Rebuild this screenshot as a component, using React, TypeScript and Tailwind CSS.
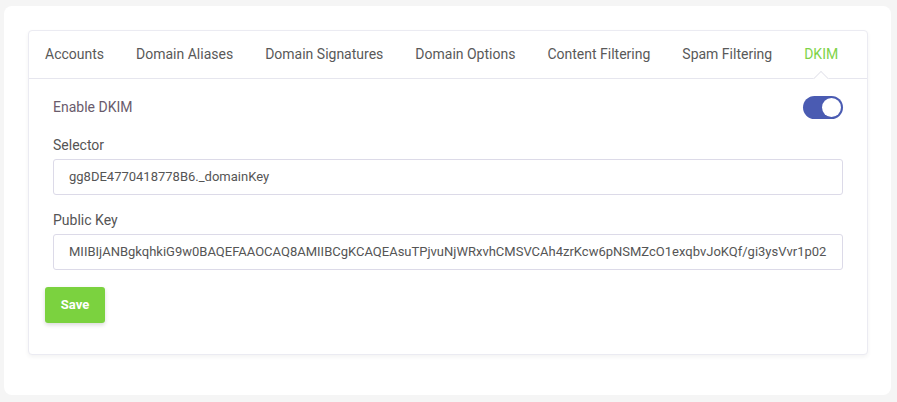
const tabs = [
  'Accounts',
  'Domain Aliases',
  'Domain Signatures',
  'Domain Options',
  'Content Filtering',
  'Spam Filtering',
  'DKIM',
];

const publicKey =
  'MIIBIjANBgkqhkiG9w0BAQEFAAOCAQ8AMIIBCgKCAQEAsuTPjvuNjWRxvhCMSVCAh4zrKcw6pNSMZcO1exqbvJoKQf/gi3ysVvr1p02';

export default function App() {
  return (
    <div className="min-h-[402px] bg-[#f5f5f5] pt-[6px] pl-[4px] pr-[6px] pb-[7px] font-['Roboto',sans-serif]">
      <div className="bg-white rounded-lg h-[389px] pt-[24px] pl-[24px] pr-[23px]">
        <div className="border border-[#ebebf2] rounded-[4px] shadow-[0_2px_4px_rgba(0,0,0,0.05)] bg-white h-[325px]">
          {/* Tabs */}
          <div className="flex h-[48px] border-b border-[#e6e6ee] text-[14px]">
            {tabs.map((t) => {
              const active = t === 'DKIM';
              return (
                <div
                  key={t}
                  className={`relative flex items-center px-4 ${active ? 'text-[#7ed348]' : 'text-[#595959]'}`}
                >
                  {t}
                  {active && (
                    <span className="absolute left-1/2 -translate-x-1/2 bottom-[-6px] w-[11px] h-[11px] rotate-45 bg-white border-l border-t border-[#e6e6ee]" />
                  )}
                </div>
              );
            })}
          </div>

          {/* Body */}
          <div className="px-[24px] pt-[17px]">
            <div className="flex items-center justify-between h-[22px]">
              <span className="text-[14px] text-[#6a5b6c]">Enable DKIM</span>
              <div className="w-[40px] h-[23px] rounded-full bg-[#4a5bb2] flex items-center justify-end pr-[2px]">
                <div className="w-[19px] h-[19px] rounded-full bg-white" />
              </div>
            </div>

            <div className="mt-[18px] text-[14px] text-[#555555] leading-[18px]">Selector</div>
            <div className="mt-[5px] h-[36px] border border-[#dcdae8] rounded-[3px] flex items-center px-[15px] text-[13px] text-[#555555]">
              gg8DE4770418778B6._domainKey
            </div>

            <div className="mt-[16px] text-[14px] text-[#555555] leading-[18px]">Public Key</div>
            <div className="mt-[5px] h-[36px] border border-[#dcdae8] rounded-[3px] flex items-center px-[15px] text-[13px] text-[#555555] overflow-hidden whitespace-nowrap">
              {publicKey}
            </div>
          </div>

          <div className="px-[16px] pt-[17px]">
            <button className="w-[60px] h-[36px] rounded-[3px] bg-[#7bd23f] text-white text-[13px] font-bold shadow-[0_2px_4px_rgba(0,0,0,0.15)]">
              Save
            </button>
          </div>
        </div>
      </div>
    </div>
  );
}
